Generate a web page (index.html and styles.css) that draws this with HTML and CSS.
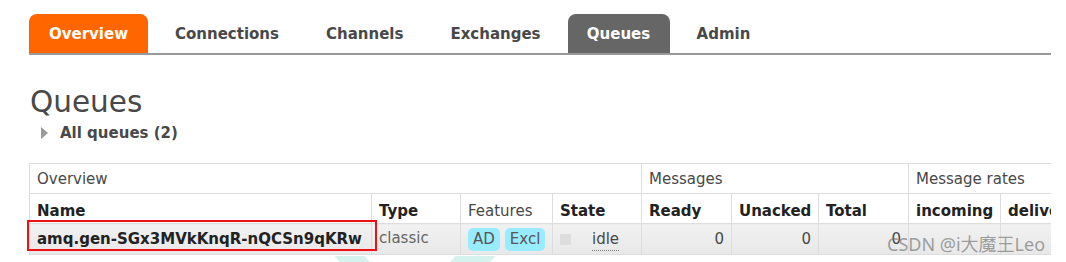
FILE: index.html
```html
<!DOCTYPE html>
<html>

<head>
	<meta charset="UTF-8">
	<title>Queues</title>
	<link rel="stylesheet" href="styles.css">
</head>

<body>
	<div class="page">
		<ul class="tabs">
			<li class="tab tab-home">Overview</li>
			<li class="tab">Connections</li>
			<li class="tab">Channels</li>
			<li class="tab tab-before">Exchanges</li>
			<li class="tab tab-current">Queues</li>
			<li class="tab tab-after">Admin</li>
		</ul>

		<h1>Queues</h1>
		<div class="section-toggle"><span class="tri"></span>All queues (2)</div>

		<div class="table-wrap">
			<table class="list">
				<colgroup>
					<col style="width: 342px">
					<col style="width: 89px">
					<col style="width: 92px">
					<col style="width: 89px">
					<col style="width: 90px">
					<col style="width: 87px">
					<col style="width: 90px">
					<col style="width: 92px">
					<col style="width: 92px">
				</colgroup>
				<thead>
					<tr class="group">
						<th colspan="4">Overview</th>
						<th colspan="3">Messages</th>
						<th colspan="2">Message rates</th>
					</tr>
					<tr class="cols">
						<th>Name</th>
						<th>Type</th>
						<th class="plain">Features</th>
						<th>State</th>
						<th>Ready</th>
						<th>Unacked</th>
						<th>Total</th>
						<th>incoming</th>
						<th>deliver / get</th>
					</tr>
				</thead>
				<tbody>
					<tr>
						<td class="name">amq.gen-SGx3MVkKnqR-nQCSn9qKRw</td>
						<td class="muted">classic</td>
						<td><span class="badge">AD</span><span class="badge">Excl</span></td>
						<td><span class="state-box"></span><span class="state">idle</span></td>
						<td class="num">0</td>
						<td class="num">0</td>
						<td class="num">0</td>
						<td></td>
						<td></td>
					</tr>
				</tbody>
			</table>
		</div>

		<div class="watermark">CSDN @i大魔王Leo</div>
		<div class="wm-shape wm-a"></div>
		<div class="wm-shape wm-b"></div>
	</div>
</body>

</html>
```

FILE: styles.css
```css
body,
html {
	margin: 0;
	padding: 0;
	background: #FFFFFF;
	overflow: hidden;
	font-family: "DejaVu Sans", Verdana, sans-serif;
	color: #484848;
}

* {
	box-sizing: border-box;
}

.page {
	position: relative;
	width: 1066px;
	height: 262px;
	padding: 14px 15px 0 29px;
}

/* top navigation */

.tabs {
	list-style: none;
	margin: 0;
	padding: 0;
	display: flex;
	height: 41px;
	border-bottom: 2px solid #999999;
}

.tab {
	height: 39px;
	display: flex;
	align-items: center;
	padding: 0 23px 0 24px;
	font-size: 15px;
	font-weight: bold;
	color: #484848;
	border-radius: 8px 8px 0 0;
}

.tab-home {
	background: #ff6600;
	color: #FFFFFF;
	padding: 0;
	width: 119px;
	margin-right: 3px;
	justify-content: center;
}

.tab-before {
	padding-right: 27px;
}

.tab-after {
	padding-left: 27px;
}

.tab-current {
	background: #666666;
	color: #FFFFFF;
	width: 102px;
	justify-content: center;
	padding: 0;
}

h1 {
	margin: 30px 0 0 1px;
	font-size: 29.5px;
	font-weight: normal;
	line-height: 34px;
	color: #484848;
}

.section-toggle {
	display: flex;
	align-items: center;
	margin: 2px 0 0 12px;
	height: 24px;
	font-size: 15px;
	font-weight: bold;
	color: #484848;
}

.section-toggle .tri {
	width: 0;
	height: 0;
	border-top: 6px solid transparent;
	border-bottom: 6px solid transparent;
	border-left: 7px solid #999999;
	margin-right: 12px;
}

/* queue table */

.table-wrap {
	margin: 15px 0 0 -3px;
	padding: 3px 0 6px 3px;
	width: 1025px;
	overflow: hidden;
}

.list {
	table-layout: fixed;
	border-collapse: collapse;
	width: 845px;
	font-size: 15px;
}

.list th,
.list td {
	border: 1px solid #dddddd;
	text-align: left;
	padding: 0 7px;
	white-space: nowrap;
	line-height: 18px;
}

.list tr.group th {
	height: 30px;
	font-weight: normal;
	color: #484848;
}

.list tr.cols th {
	height: 30px;
	font-weight: bold;
	color: #222222;
	padding-top: 4px;
	overflow: hidden;
}

.list tr.cols th.plain {
	font-weight: normal;
	color: #484848;
}

.list tbody td {
	height: 31px;
	background: linear-gradient(#f1f1f1, #e8e8e8);
	color: #484848;
}

.list td.name {
	font-weight: bold;
	color: #222222;
	position: relative;
}

.list td.name:after {
	content: "";
	position: absolute;
	left: -3px;
	top: -4px;
	right: -6px;
	bottom: 3px;
	border: 2px solid #ee1111;
	z-index: 2;
}

.list td.muted {
	color: #666666;
	padding-bottom: 3px;
}

.badge {
	display: inline-block;
	background: #99ebff;
	color: #555555;
	border-radius: 5px;
	padding: 2px 5px;
	margin-right: 5px;
	line-height: 19px;
}

.state-box {
	display: inline-block;
	width: 11px;
	height: 11px;
	background: #dddddd;
	margin-right: 21px;
	vertical-align: -1px;
}

.state {
	border-bottom: 1px dotted #777777;
	padding-bottom: 2px;
}

.list td.num {
	text-align: right;
	padding-right: 7px;
}

.watermark {
	position: absolute;
	left: 887px;
	top: 230px;
	font-family: "Noto Sans", "Noto Sans CJK SC", sans-serif;
	font-size: 18px;
	color: rgba(120, 120, 120, .7);
}

.wm-shape {
	position: absolute;
	background: #d6f2ee;
	height: 8px;
	top: 256px;
}

.wm-a {
	left: 338px;
	width: 30px;
	transform: skewX(40deg);
}

.wm-b {
	left: 452px;
	width: 40px;
	transform: skewX(-40deg);
}
```
